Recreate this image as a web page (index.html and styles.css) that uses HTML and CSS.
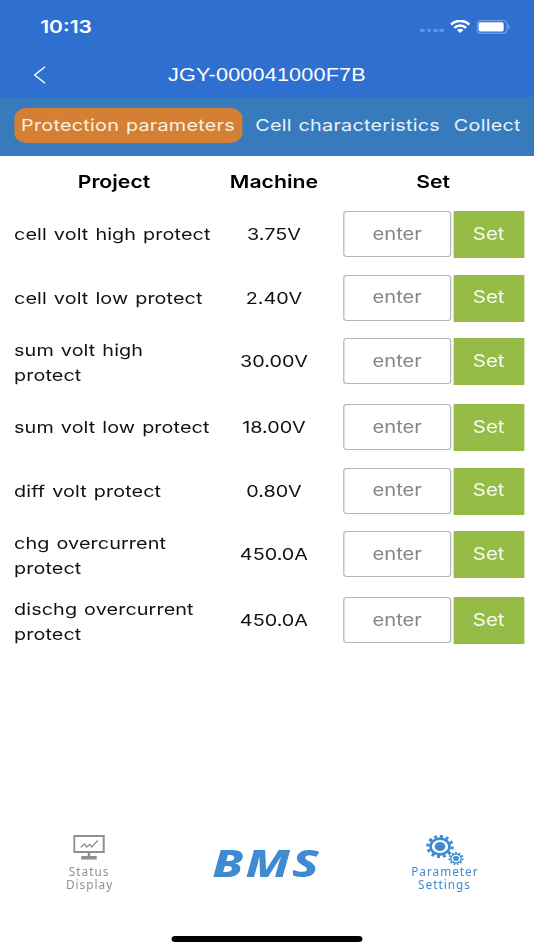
FILE: index.html
```html
<!DOCTYPE html>
<html lang="en">
<head>
    <meta charset="UTF-8">
    <meta name="viewport" content="width=device-width, initial-scale=1.0">
    <title>BMS</title>
    <link rel="stylesheet" href="styles.css">
</head>
<body>
    <div class="app">
        <header class="header">
            <div class="status-bar">
                <span class="time">10:13</span>
                <div class="status-icons">
                    <span class="signal"><i></i><i></i><i></i><i></i></span>
                    <svg class="wifi" viewBox="0 0 20 13" preserveAspectRatio="none">
                        <path d="M1.1 4.6a12.6 12.6 0 0 1 17.8 0" />
                        <path d="M4.2 7.9a8.2 8.2 0 0 1 11.6 0" />
                        <path class="dot" d="M6.8 10a4.5 4.5 0 0 1 6.4 0L10 13z" />
                    </svg>
                    <svg class="battery" viewBox="0 0 34 14" preserveAspectRatio="none">
                        <rect class="shell" x="0.6" y="0.6" width="30.4" height="12.6" rx="3.4" />
                        <rect class="level" x="2.2" y="2.2" width="25.4" height="9.4" rx="1.8" />
                        <path class="tip" d="M32.2 4.6c1.8.5 1.8 4.2 0 4.7z" />
                    </svg>
                </div>
            </div>
            <div class="title-bar">
                <svg class="back" viewBox="0 0 12 18" preserveAspectRatio="none">
                    <path d="M11 0.8L1 9l10 8.2" />
                </svg>
                <span class="title">JGY-000041000F7B</span>
            </div>
        </header>

        <nav class="tabs">
            <a class="tab active">Protection parameters</a>
            <a class="tab cell">Cell characteristics</a>
            <a class="tab collect">Collect</a>
        </nav>

        <main class="params">
            <div class="row head">
                <span>Project</span>
                <span>Machine</span>
                <span class="set">Set</span>
            </div>
            <div class="row">
                <span class="label">cell volt high protect</span>
                <span class="value">3.75V</span>
                <div class="setter"><input type="text" placeholder="enter"><button>Set</button></div>
            </div>
            <div class="row">
                <span class="label">cell volt low protect</span>
                <span class="value">2.40V</span>
                <div class="setter"><input type="text" placeholder="enter"><button>Set</button></div>
            </div>
            <div class="row">
                <span class="label">sum volt high<br>protect</span>
                <span class="value">30.00V</span>
                <div class="setter"><input type="text" placeholder="enter"><button>Set</button></div>
            </div>
            <div class="row">
                <span class="label">sum volt low protect</span>
                <span class="value">18.00V</span>
                <div class="setter"><input type="text" placeholder="enter"><button>Set</button></div>
            </div>
            <div class="row">
                <span class="label">diff volt protect</span>
                <span class="value">0.80V</span>
                <div class="setter"><input type="text" placeholder="enter"><button>Set</button></div>
            </div>
            <div class="row">
                <span class="label">chg overcurrent<br>protect</span>
                <span class="value">450.0A</span>
                <div class="setter"><input type="text" placeholder="enter"><button>Set</button></div>
            </div>
            <div class="row">
                <span class="label">dischg overcurrent<br>protect</span>
                <span class="value">450.0A</span>
                <div class="setter"><input type="text" placeholder="enter"><button>Set</button></div>
            </div>
        </main>

        <footer class="bottom-nav">
            <a class="nav-item">
                <svg class="monitor" viewBox="0 0 32 25" preserveAspectRatio="none">
                    <rect x="1" y="1" width="29.5" height="16" />
                    <path class="stem" d="M15.7 17v5" />
                    <path class="base" d="M8 22.8h15.5" />
                    <path class="line" d="M7.5 12.5l4-3.5 2 3 3-2.5 2 2.5 6-6.5" />
                </svg>
                <span class="caption">Status</span>
                <span class="caption">Display</span>
            </a>
            <span class="logo">BMS</span>
            <a class="nav-item active">
                <svg class="gears" viewBox="0 0 38 31" preserveAspectRatio="none">
                    <ellipse class="teeth" cx="14" cy="11.5" rx="12.2" ry="10" pathLength="48" />
                    <ellipse class="ring" cx="14" cy="11.5" rx="9.5" ry="7.9" />
                    <ellipse class="hub" cx="14" cy="11.5" rx="5.3" ry="4.6" />
                    <ellipse class="teeth small" cx="30" cy="23.5" rx="6.6" ry="5.6" pathLength="44" />
                    <ellipse class="ring small" cx="30" cy="23.5" rx="5.2" ry="4.4" />
                    <ellipse class="hub" cx="30" cy="23.5" rx="2.9" ry="2.4" />
                </svg>
                <span class="caption">Parameter</span>
                <span class="caption">Settings</span>
            </a>
        </footer>
        <div class="home-bar"></div>
    </div>
</body>
</html>
```

FILE: styles.css
```css
* {
    box-sizing: border-box;
}
body {
    margin: 0;
    width: 534px;
    height: 950px;
    overflow: hidden;
    background-color: #fff;
    font-family: Inter, "Liberation Sans", Arial, sans-serif;
}
/* everything is laid out 445px wide and widened to the full 534px */
.app {
    display: flex;
    flex-direction: column;
    width: 445px;
    height: 950px;
    transform: scaleX(1.2);
    transform-origin: 0 0;
    color: #111;
}
.header {
    height: 97px;
    background-color: #2f6fd0;
    color: #fff;
}
.status-bar {
    display: flex;
    justify-content: space-between;
    align-items: center;
    height: 53px;
    padding: 0 20px 0 33.5px;
}
.time {
    font-size: 17.5px;
    font-weight: 600;
}
.status-icons {
    display: flex;
    align-items: center;
}
.signal {
    display: flex;
    gap: 1.8px;
    margin: 8px 5px 0 0;
}
.signal i {
    width: 3.6px;
    height: 3.6px;
    border-radius: 1px;
    background-color: #6294e0;
}
.wifi {
    width: 17px;
    height: 13px;
    margin-right: 5px;
    fill: none;
    stroke: #fff;
    stroke-width: 2.6;
}
.wifi .dot {
    fill: #fff;
    stroke: none;
}
.battery {
    width: 28px;
    height: 14px;
}
.battery .shell {
    fill: none;
    stroke: #86ace8;
    stroke-width: 1;
}
.battery .level {
    fill: #fff;
}
.battery .tip {
    fill: #86ace8;
}
.title-bar {
    display: flex;
    align-items: center;
    height: 44px;
    padding-left: 27.5px;
}
.back {
    width: 10.5px;
    height: 18px;
    fill: none;
    stroke: #fff;
    stroke-width: 1.4;
}
.title {
    margin-left: 102px;
    font-family: "Liberation Sans", Arial, sans-serif;
    font-size: 18px;
    letter-spacing: 0.15px;
}
.tabs {
    display: flex;
    align-items: center;
    height: 58.5px;
    padding: 0 0 1px 11.7px;
    overflow: hidden;
    background-color: #387bbd;
    color: #e8f3fc;
    font-size: 16.5px;
    letter-spacing: 0.2px;
    word-spacing: 0.8px;
    white-space: nowrap;
}
.tab {
    line-height: 35px;
}
.tab.active {
    width: 190px;
    margin-right: 11px;
    border-radius: 10px;
    background-color: #d57f35;
    color: #fdf0dc;
    text-align: center;
}
.tab.collect {
    margin-left: 11.5px;
}
.params {
    font-size: 16.5px;
}
.row {
    display: grid;
    grid-template-columns: 166.6px 100px 1fr;
    margin-bottom: 16.7px;
    padding: 0 8.3px 0 11.7px;
}
.row.head {
    height: 55.5px;
    margin: 0;
    line-height: 51px;
    font-size: 17.7px;
    font-weight: 600;
    color: #000;
    text-align: center;
}
.row.head .set {
    padding-left: 7px;
}
.label {
    display: flex;
    align-items: center;
    min-height: 47px;
    line-height: 24.5px;
    letter-spacing: 0.08px;
    word-spacing: 1.1px;
    white-space: nowrap;
}
.value {
    line-height: 46px;
    text-align: center;
}
.setter {
    display: flex;
    align-items: flex-start;
    justify-content: flex-end;
    gap: 2px;
}
.setter input {
    width: 89.3px;
    height: 46px;
    padding: 0 0 1px;
    border: 1px solid #b5b5b5;
    border-radius: 3px;
    background-color: #fff;
    font: inherit;
    font-size: 16.8px;
    text-align: center;
}
.setter input::placeholder {
    color: #858585;
}
.setter button {
    width: 59px;
    height: 47px;
    padding: 0 0 2px;
    border: none;
    background-color: #95bc47;
    color: #f9fcf0;
    font: inherit;
    font-size: 17px;
}
.bottom-nav {
    display: grid;
    grid-template-columns: repeat(3, 1fr);
    height: 56px;
    margin-top: auto;
    font-family: "Noto Sans", "Open Sans", sans-serif;
}
.nav-item {
    display: flex;
    flex-direction: column;
    align-items: center;
    color: #8f8f8f;
}
.nav-item.active {
    color: #3f8ad0;
}
/* captions keep their normal width */
.caption {
    font-size: 11.8px;
    line-height: 12.5px;
    letter-spacing: 1px;
    transform: scaleX(0.8333);
}
.nav-item svg {
    height: 31px;
    margin-bottom: -1px;
    fill: none;
    stroke: currentColor;
}
.nav-item .monitor {
    width: 26.7px;
    height: 25px;
    margin-bottom: 5px;
    stroke-width: 2;
}
.monitor .stem {
    stroke-width: 2.5;
}
.monitor .base {
    stroke-width: 3.6;
}
.monitor .line {
    stroke-width: 1.3;
}
.gears {
    width: 31.7px;
}
.gears .teeth {
    stroke-width: 3.2;
    stroke-dasharray: 2 2;
}
.gears .ring {
    stroke-width: 2.7;
}
.gears .teeth.small {
    stroke-width: 2;
}
.gears .ring.small {
    stroke-width: 1.3;
}
.gears .hub {
    fill: currentColor;
    stroke: none;
}
.logo {
    font-size: 37px;
    font-weight: 800;
    font-style: italic;
    line-height: 56px;
    letter-spacing: 1.6px;
    color: #3f8ad0;
    text-align: center;
    transform: scaleX(1.12);
}
.home-bar {
    width: 159px;
    height: 5.5px;
    margin: 45px auto 8.5px;
    border-radius: 3px;
    background-color: #000;
}
```
